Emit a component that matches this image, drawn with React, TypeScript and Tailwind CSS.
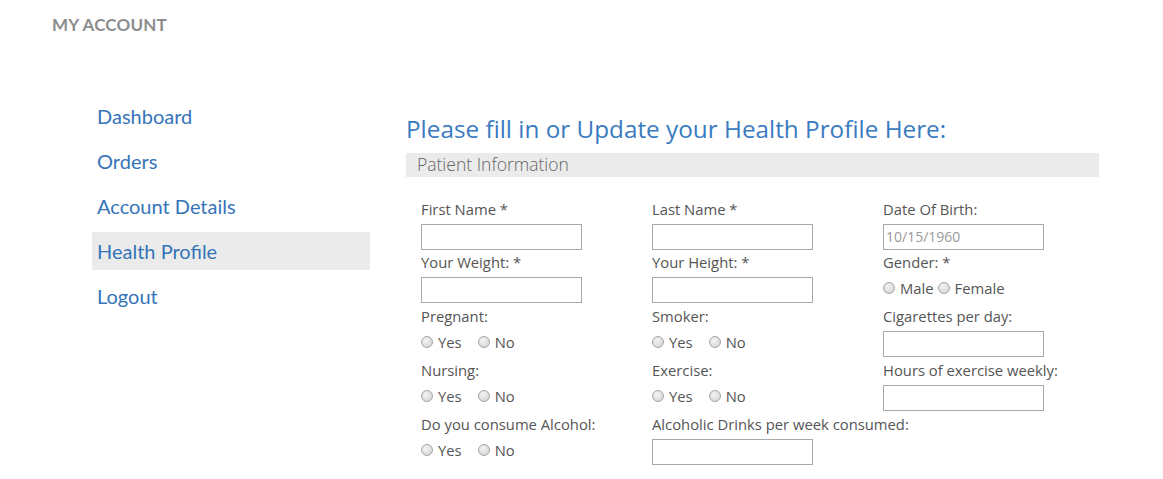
import type { ReactNode } from 'react';

const NAV = ['Dashboard', 'Orders', 'Account Details', 'Health Profile', 'Logout'];

// Windows-style grey radio dot
function Radio({ label }: { label: string }) {
  return (
    <span className="flex items-center">
      <span className="h-[12px] w-[12px] rounded-full border border-[#a6a6a6] bg-[radial-gradient(circle_at_40%_35%,#f4f4f4,#cfcfcf)]" />
      <span className="ml-[5px]">{label}</span>
    </span>
  );
}

function YesNo() {
  return (
    <div className="mt-[6px] flex items-center gap-[16px] leading-[20px]">
      <Radio label="Yes" />
      <Radio label="No" />
    </div>
  );
}

function TextBox({ placeholder }: { placeholder?: string }) {
  return (
    <input
      placeholder={placeholder}
      className="mt-[5px] block h-[26px] w-[161px] border border-[#a9a9a9] bg-white px-[2px] text-[14px] text-[#333] placeholder:text-[#999] outline-none"
    />
  );
}

function Field({ label, children }: { label: string; children: ReactNode }) {
  return (
    <div>
      <div className="whitespace-nowrap leading-[20px]">{label}</div>
      {children}
    </div>
  );
}

export default function App() {
  return (
    <div className="min-h-[479px] bg-white">
      <div className="px-[52px] pt-[12px] font-['Lato',sans-serif] text-[17px] font-bold tracking-[0.2px] text-[#8c8c8c]">
        MY ACCOUNT
      </div>

      <div className="mt-[59px] flex">
        <nav className="ml-[92px] w-[278px] font-['Lato',sans-serif] text-[20px] text-[#3574b8]">
          {NAV.map((item) => (
            <div
              key={item}
              className={`flex h-[38px] items-center px-[5px] mb-[7px] ${
                item === 'Health Profile' ? 'bg-[#ebebeb]' : ''
              }`}
            >
              {item}
            </div>
          ))}
        </nav>

        <main className="ml-[36px] w-[693px]">
          <h1 className="mt-[17px] font-['Open_Sans',sans-serif] text-[24.3px] leading-[30px] text-[#3a7bc0]">
            Please fill in or Update your Health Profile Here:
          </h1>
          <div className="mt-[9px] flex h-[24px] items-center bg-[#ebebeb] pl-[11px] font-['Open_Sans',sans-serif] text-[17.5px] font-light text-[#666]">
            Patient Information
          </div>

          <div className="mt-[22px] ml-[15px] grid grid-cols-[231px_231px_231px] auto-rows-[53.75px] font-['Open_Sans',sans-serif] text-[14.8px] text-[#555]">
            <Field label="First Name *">
              <TextBox />
            </Field>
            <Field label="Last Name *">
              <TextBox />
            </Field>
            <Field label="Date Of Birth:">
              <TextBox placeholder="10/15/1960" />
            </Field>

            <Field label="Your Weight: *">
              <TextBox />
            </Field>
            <Field label="Your Height: *">
              <TextBox />
            </Field>
            <Field label="Gender: *">
              <div className="mt-[6px] flex items-center gap-[4px] leading-[20px]">
                <Radio label="Male" />
                <Radio label="Female" />
              </div>
            </Field>

            <Field label="Pregnant:">
              <YesNo />
            </Field>
            <Field label="Smoker:">
              <YesNo />
            </Field>
            <Field label="Cigarettes per day:">
              <TextBox />
            </Field>

            <Field label="Nursing:">
              <YesNo />
            </Field>
            <Field label="Exercise:">
              <YesNo />
            </Field>
            <Field label="Hours of exercise weekly:">
              <TextBox />
            </Field>

            <Field label="Do you consume Alcohol:">
              <YesNo />
            </Field>
            <Field label="Alcoholic Drinks per week consumed:">
              <TextBox />
            </Field>
          </div>
        </main>
      </div>
    </div>
  );
}
